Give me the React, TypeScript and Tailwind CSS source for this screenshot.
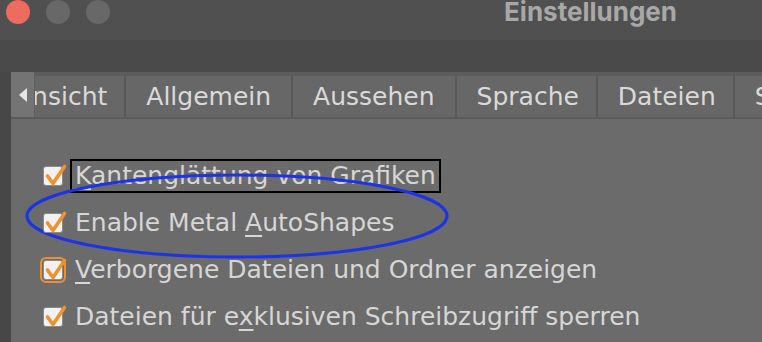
import React from 'react'

const fontUi = "font-['DejaVu_Sans',sans-serif]"

function Check({ focused = false }: { focused?: boolean }) {
  return (
    <span
      className={`relative block w-[20px] h-[20px] shrink-0 rounded-[3px] bg-[#f2f2f2] border border-[#8a8a8a] ${
        focused ? 'outline-2 outline-[#e8913a] outline-offset-[1px]' : ''
      }`}
    >
      <svg className="absolute left-0 top-0 overflow-visible" width="20" height="20" viewBox="0 0 20 20">
        <path d="M3.5 9 L9 16.5 L20.5 -0.5" fill="none" stroke="#f0912c" strokeWidth="3.6" strokeLinecap="round" strokeLinejoin="round" />
      </svg>
    </span>
  )
}

type Row = { before: string; key: string; after: string; focused?: boolean; box?: boolean }

const rows: Row[] = [
  { before: '', key: 'K', after: 'antenglättung von Grafiken', box: true },
  { before: 'Enable Metal ', key: 'A', after: 'utoShapes' },
  { before: '', key: 'V', after: 'erborgene Dateien und Ordner anzeigen', focused: true },
  { before: 'Dateien für e', key: 'x', after: 'klusiven Schreibzugriff sperren' },
]

const tabs = ['Ansicht', 'Allgemein', 'Aussehen', 'Sprache', 'Dateien', 'Speichern']

export default function App() {
  return (
    <div className={`w-[762px] h-[342px] overflow-hidden bg-[#4a4a4a] flex flex-col ${fontUi}`}>
      {/* title bar */}
      <div className="h-[40px] shrink-0 bg-[#505050] flex items-start">
        <div className="flex gap-[16px] pl-[6px]">
          <span className="w-[24px] h-[24px] rounded-full bg-[#ee6b5f]" />
          <span className="w-[24px] h-[24px] rounded-full bg-[#686868]" />
          <span className="w-[24px] h-[24px] rounded-full bg-[#686868]" />
        </div>
        <div className="ml-auto mr-[85px] -mt-[5px] font-['Inter',sans-serif] font-bold text-[26px] text-[#a8a8a8] leading-[34px]">
          Einstellungen
        </div>
      </div>

      <div className="flex flex-1 pt-[32px]">
        <div className="w-[11px] shrink-0 bg-[#474747]" />
        <div className="flex-1 flex flex-col bg-[#6b6b6b]">
          {/* tabs */}
          <div className="h-[47px] shrink-0 flex bg-[#5c5c5c] border-b-2 border-[#5a5a5a]">
            <div className="w-[24px] shrink-0 bg-[#747474] flex items-center justify-center border-r border-[#5e5e5e]">
              <svg width="8" height="14" viewBox="0 0 8 14">
                <path d="M8 0 L0 7 L8 14 Z" fill="#e6e6e6" />
              </svg>
            </div>
            <div className="flex-1 overflow-hidden pt-[4px]">
              <div className="flex h-full -ml-[38px]">
                {tabs.map((t, i) => (
                  <div
                    key={t}
                    className={`shrink-0 h-full flex items-center ${
                      i === 0 ? 'pl-[18px] pr-[17px]' : i > 2 ? 'pl-[20px] pr-[17px]' : 'pl-[20px] pr-[20px]'
                    } bg-[#676767] border-r-2 border-[#585858] text-[25px] text-[#dadada]`}
                  >
                    {t}
                  </div>
                ))}
              </div>
            </div>
          </div>

          {/* content */}
          <div className="relative flex-1 pt-[33px] pl-[32px]">
            <svg className="absolute left-[10px] top-[53px]" width="432" height="92" viewBox="0 0 432 92">
              <ellipse cx="216" cy="44" rx="210" ry="41" fill="none" stroke="#1d33e6" strokeWidth="3" />
            </svg>
            {rows.map((r) => (
              <div key={r.key + r.after} className="h-[47px] flex items-center gap-[11px]">
                <Check focused={r.focused} />
                <span
                  className={`text-[25px] leading-[28px] text-[#d6d6d6] whitespace-nowrap px-[3px] -ml-[4px] border-2 ${
                    r.box ? 'border-black' : 'border-transparent'
                  } py-[1px]`}
                >
                  {r.before}
                  <span className="underline underline-offset-[4px] decoration-[1.5px]">{r.key}</span>
                  {r.after}
                </span>
              </div>
            ))}
          </div>
        </div>
      </div>
    </div>
  )
}
